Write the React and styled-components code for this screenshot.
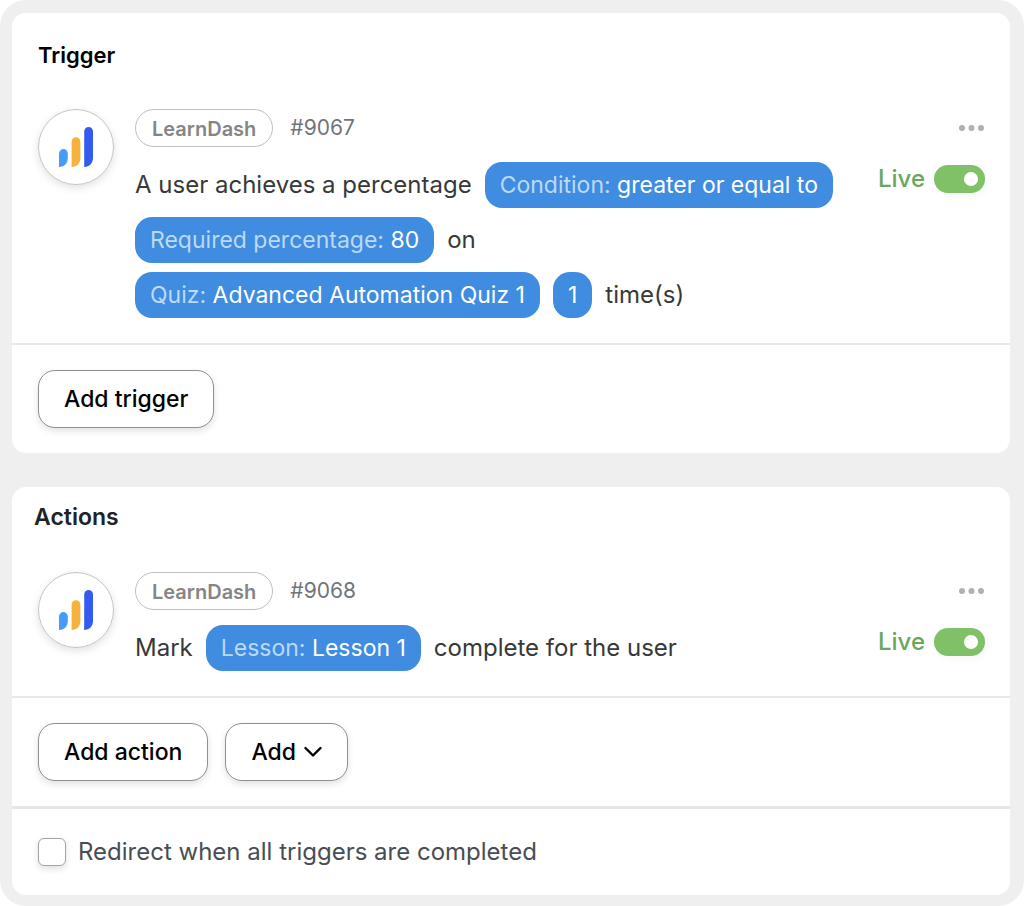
/* eslint-disable react/prop-types */
import React, { useState } from 'react';
import styled, { createGlobalStyle } from 'styled-components';

const GlobalStyle = createGlobalStyle`
  * {
    box-sizing: border-box;
  }
  body {
    margin: 0;
    background: #ffffff;
    color: #383838;
    font-family: Inter, "Open Sans", sans-serif;
    font-size: 24px;
    line-height: 30px;
  }
  button, input {
    margin: 0;
    font: inherit;
  }
`;

const Page = styled.main`
  display: flex;
  flex-direction: column;
  gap: 34px;
  padding: 13px 14px 11px 12px;
  border-radius: 26px;
  background: #efefef;
`;

const Card = styled.section`
  border-radius: 14px;
  background: #ffffff;
`;

const CardTitle = styled.h2`
  margin: 0;
  padding: ${({ $compact }) => ($compact ? '15px 22px 0' : '27px 26px 0')};
  color: ${({ $compact }) => ($compact ? '#1d2327' : '#000000')};
  font-size: ${({ $compact }) => ($compact ? '23px' : '22px')};
  font-weight: 600;
  line-height: 30px;
`;

const Item = styled.div`
  display: flex;
  align-items: flex-start;
  padding: ${({ $top }) => $top}px 25px 25px 26px;
`;

const Logo = styled.div`
  display: flex;
  flex: none;
  align-items: center;
  justify-content: center;
  width: 76px;
  height: 76px;
  margin-right: 21px;
  border: 1px solid #c4c4c4;
  border-radius: 50%;
  box-shadow: 0 3px 8px rgba(0, 0, 0, 0.12);
`;

const Details = styled.div`
  flex: 1;
  min-width: 0;
`;

const Meta = styled.div`
  display: flex;
  align-items: center;
  gap: 17px;
  height: 38px;
  margin-bottom: 15px;
`;

const Tag = styled.span`
  padding: 4px 16px 2px;
  border: 1px solid #bfbfbf;
  border-radius: 19px;
  color: #858585;
  font-size: 20px;
  font-weight: 600;
  line-height: 30px;
`;

const ItemId = styled.span`
  color: #70757a;
  font-size: 21px;
`;

const Sentence = styled.div`
  display: flex;
  flex-wrap: wrap;
  align-items: center;
  gap: 9px 13px;
`;

const Token = styled.button`
  padding: 8px 15px;
  border: none;
  border-radius: 17px;
  background: #408ce0;
  color: #ffffff;
  font-size: 23px;
  font-weight: 400;
  line-height: 30px;
  cursor: pointer;
`;

const TokenLabel = styled.span`
  color: #bcd9f7;
`;

const Side = styled.div`
  display: flex;
  flex: none;
  flex-direction: column;
  align-items: flex-end;
  gap: 17px;
  margin-left: 14px;
`;

const MoreButton = styled.button`
  display: flex;
  align-items: center;
  height: 38px;
  padding: 0;
  border: none;
  background: transparent;
  cursor: pointer;
`;

const Live = styled.label`
  display: flex;
  align-items: center;
  gap: 9px;
  color: #6ba75a;
  font-weight: 500;
  cursor: pointer;
`;

const Switch = styled.input`
  display: flex;
  align-items: center;
  width: 51px;
  height: 28px;
  padding: 0 7px;
  border-radius: 14px;
  background: #b5b5b5;
  box-shadow: 3px 2px 10px rgba(0, 0, 0, 0.04);
  appearance: none;
  cursor: pointer;
  &::before {
    content: '';
    width: 14px;
    height: 14px;
    border-radius: 50%;
    background: #ffffff;
  }
  &:checked {
    justify-content: flex-end;
    background: #80c067;
  }
`;

const Footer = styled.div`
  display: flex;
  gap: 17px;
  padding: 25px 26px;
  border-top: 2px solid #e8e8e8;
`;

const Button = styled.button`
  display: flex;
  align-items: center;
  gap: 8px;
  height: 58px;
  padding: 0 25px;
  border: 1px solid #8f8f8f;
  border-radius: 17px;
  background: #ffffff;
  box-shadow: 0 3px 7px rgba(0, 0, 0, 0.12);
  color: #000000;
  font-size: 23px;
  font-weight: 500;
  cursor: pointer;
  &:hover {
    background: #f7f7f7;
  }
`;

const Redirect = styled.label`
  display: flex;
  align-items: center;
  gap: 12px;
  padding: 28px 26px;
  border-top: 3px solid #e6e6e6;
  color: #484d54;
  cursor: pointer;
`;

const Checkbox = styled.input`
  width: 28px;
  height: 28px;
  border: 1px solid #a3a3a3;
  border-radius: 6px;
  background: #ffffff;
  box-shadow: 0 3px 7px rgba(0, 0, 0, 0.12);
  appearance: none;
  cursor: pointer;
  &:checked {
    background: #408ce0;
  }
`;

const LearnDashLogo = () => (
  <svg width="34" height="42" viewBox="0 0 34 42" aria-hidden="true">
    <path d="M0 41V27.500a4.400 4.400 0 0 1 8.800 0V32c0 5-3.500 9-8.800 9z" fill="#479bfb" />
    <path d="M12.600 41V15.700a4.400 4.400 0 0 1 8.800 0V32c0 5-3.500 9-8.800 9z" fill="#f5b33e" />
    <path d="M25.200 41V5.400a4.400 4.400 0 0 1 8.800 0V32c0 5-3.500 9-8.800 9z" fill="#345bed" />
  </svg>
);

const DotsIcon = () => (
  <svg width="27" height="6" viewBox="0 0 27 6" fill="#b0b0b0" aria-hidden="true">
    <circle cx="4" cy="3" r="3" />
    <circle cx="13.500" cy="3" r="3" />
    <circle cx="23" cy="3" r="3" />
  </svg>
);

const ChevronIcon = () => (
  <svg width="18" height="12" viewBox="0 0 18 12" fill="none" aria-hidden="true">
    <path d="M1.500 2L9 9.500l7.500-7.500" stroke="#000000" strokeWidth="2.400" strokeLinecap="round" strokeLinejoin="round" />
  </svg>
);

const Field = ({ label, children }) => (
  <Token type="button">
    {label && (
      <TokenLabel>
        {label}
        :
        {' '}
      </TokenLabel>
    )}
    {children}
  </Token>
);

const RecipeItem = ({ id, top, children }) => {
  const [live, setLive] = useState(true);

  return (
    <Item $top={top}>
      <Logo><LearnDashLogo /></Logo>
      <Details>
        <Meta>
          <Tag>LearnDash</Tag>
          <ItemId>{`#${id}`}</ItemId>
        </Meta>
        <Sentence>{children}</Sentence>
      </Details>
      <Side>
        <MoreButton type="button" aria-label="More options"><DotsIcon /></MoreButton>
        <Live htmlFor={`live-${id}`}>
          {live ? 'Live' : 'Draft'}
          <Switch
            id={`live-${id}`}
            type="checkbox"
            checked={live}
            onChange={(e) => setLive(e.target.checked)}
          />
        </Live>
      </Side>
    </Item>
  );
};

const App = () => {
  const [redirect, setRedirect] = useState(false);

  return (
    <>
      <GlobalStyle />
      <Page>
        <Card>
          <CardTitle>Trigger</CardTitle>
          <RecipeItem id={9067} top={39}>
            <span>A user achieves a percentage</span>
            <Field label="Condition">greater or equal to</Field>
            <Field label="Required percentage">80</Field>
            <span>on</span>
            <Field label="Quiz">Advanced Automation Quiz 1</Field>
            <Field>1</Field>
            <span>time(s)</span>
          </RecipeItem>
          <Footer>
            <Button type="button">Add trigger</Button>
          </Footer>
        </Card>
        <Card>
          <CardTitle $compact>Actions</CardTitle>
          <RecipeItem id={9068} top={40}>
            <span>Mark</span>
            <Field label="Lesson">Lesson 1</Field>
            <span>complete for the user</span>
          </RecipeItem>
          <Footer>
            <Button type="button">Add action</Button>
            <Button type="button">
              Add
              <ChevronIcon />
            </Button>
          </Footer>
          <Redirect htmlFor="redirect">
            <Checkbox
              id="redirect"
              type="checkbox"
              checked={redirect}
              onChange={(e) => setRedirect(e.target.checked)}
            />
            Redirect when all triggers are completed
          </Redirect>
        </Card>
      </Page>
    </>
  );
};

export default App;
